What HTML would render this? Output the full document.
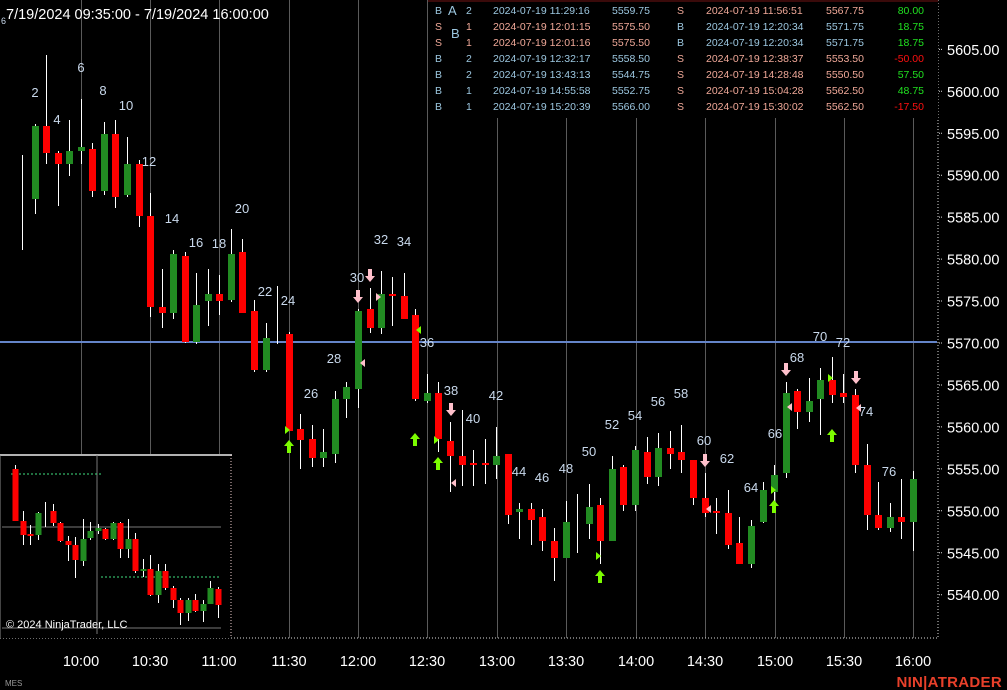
<!DOCTYPE html>
<html><head><meta charset="utf-8"><style>
html,body{margin:0;padding:0;background:#000;width:1007px;height:690px;overflow:hidden}
svg{display:block}
text{font-family:"Liberation Sans",sans-serif}
.n{fill:#c9d9ec;font-size:13px;text-anchor:middle;font-family:"DejaVu Sans Mono","Liberation Mono",monospace}
.ax{fill:#fff;font-size:14.5px}
.t{font-family:"Liberation Sans",sans-serif;font-size:10.5px}
</style></head><body>
<svg id="s" width="1007" height="690" xmlns="http://www.w3.org/2000/svg">
<rect width="1007" height="690" fill="#000"/>
<g id="grid" stroke="#5a5a5a" stroke-width="1"></g>
<line x1="0" y1="342" x2="937" y2="342" stroke="#6484c8" stroke-width="2"/>
<g id="candles"></g>
<g fill="#7cfc00">
<path d="M289 440 l-5 6 h3 v7 h4 v-7 h3z"/>
<path d="M415 433 l-5 6 h3 v7 h4 v-7 h3z"/>
<path d="M438 457 l-5 6 h3 v7 h4 v-7 h3z"/>
<path d="M600 570 l-5 6 h3 v7 h4 v-7 h3z"/>
<path d="M774 500 l-5 6 h3 v7 h4 v-7 h3z"/>
<path d="M832 429 l-5 6 h3 v7 h4 v-7 h3z"/>
<path d="M285 426 l5 4 l-5 4z"/><path d="M434 436 l5 4 l-5 4z"/><path d="M596 552 l5 4 l-5 4z"/><path d="M771 486 l5 4 l-5 4z"/><path d="M828 374 l5 4 l-5 4z"/><path d="M421 326 l-5 4 l5 4z"/>
</g>
<g fill="#ffc0cb">
<path d="M358 303 l-5 -6 h3 v-7 h4 v7 h3z"/>
<path d="M370 282 l-5 -6 h3 v-7 h4 v7 h3z"/>
<path d="M451 416 l-5 -6 h3 v-7 h4 v7 h3z"/>
<path d="M705 467 l-5 -6 h3 v-7 h4 v7 h3z"/>
<path d="M786 376 l-5 -6 h3 v-7 h4 v7 h3z"/>
<path d="M856 384 l-5 -6 h3 v-7 h4 v7 h3z"/>
<path d="M365 359 l-5 4 l5 4z"/><path d="M456 479 l-5 4 l5 4z"/><path d="M711 505 l-5 4 l5 4z"/><path d="M792 403 l-5 4 l5 4z"/><path d="M861 404 l-5 4 l5 4z"/><path d="M376 293 l5 4 l-5 4z"/>
</g>
<g class="n">
<text x="35" y="97">2</text><text x="57" y="124">4</text><text x="81" y="72">6</text><text x="103" y="95">8</text><text x="126" y="110">10</text><text x="149" y="166">12</text><text x="172" y="223">14</text><text x="196" y="247">16</text><text x="219" y="248">18</text><text x="242" y="213">20</text><text x="265" y="296">22</text><text x="288" y="305">24</text><text x="311" y="398">26</text><text x="334" y="363">28</text><text x="357" y="282">30</text><text x="381" y="244">32</text><text x="404" y="246">34</text><text x="427" y="347">36</text><text x="451" y="395">38</text><text x="473" y="423">40</text><text x="496" y="400">42</text><text x="519" y="476">44</text><text x="542" y="482">46</text><text x="566" y="473">48</text><text x="589" y="456">50</text><text x="612" y="429">52</text><text x="635" y="420">54</text><text x="658" y="406">56</text><text x="681" y="398">58</text><text x="704" y="445">60</text><text x="727" y="463">62</text><text x="751" y="492">64</text><text x="775" y="438">66</text><text x="797" y="362">68</text><text x="820" y="341">70</text><text x="843" y="347">72</text><text x="866" y="416">74</text><text x="889" y="476">76</text>
</g>
<line x1="938" y1="0" x2="938" y2="638" stroke="#ddd" stroke-dasharray="1,2"/>
<line x1="0" y1="638" x2="938" y2="638" stroke="#ddd" stroke-dasharray="1,2"/>
<g id="ylab" class="ax"></g>
<g class="ax" text-anchor="middle">
<text x="81" y="666">10:00</text><text x="150" y="666">10:30</text><text x="219" y="666">11:00</text><text x="289" y="666">11:30</text><text x="358" y="666">12:00</text><text x="427" y="666">12:30</text><text x="497" y="666">13:00</text><text x="566" y="666">13:30</text><text x="636" y="666">14:00</text><text x="705" y="666">14:30</text><text x="775" y="666">15:00</text><text x="844" y="666">15:30</text><text x="913" y="666">16:00</text>
</g>
<text x="5" y="686" fill="#999" font-size="8">MES</text>
<text x="1002" y="687" fill="#e8402a" font-size="15" font-weight="bold" text-anchor="end" letter-spacing="0.3">NIN|ATRADER</text>
<text x="6" y="19" fill="#fff" font-size="14.5">7/19/2024 09:35:00 - 7/19/2024 16:00:00</text>
<text x="1" y="24" fill="#c9d9ec" font-size="9">6</text>
<rect x="428" y="0" width="510" height="118" fill="#000"/>
<line x1="428" y1="1" x2="938" y2="1" stroke="#3a0a0a" stroke-width="2"/>
<text x="448" y="15" fill="#9cc7e0" font-size="13">A</text>
<text x="451" y="38" fill="#9cc7e0" font-size="13">B</text>
<g class="t" id="tbl"></g>
<rect x="0" y="454" width="231" height="184" fill="#000"/>
<line x1="0" y1="455" x2="232" y2="455" stroke="#eee" stroke-width="1.5"/>
<line x1="231" y1="455" x2="231" y2="638" stroke="#e8c8c8" stroke-dasharray="1,2"/>
<line x1="0" y1="455" x2="0" y2="638" stroke="#888"/>
<line x1="2" y1="527" x2="221" y2="527" stroke="#777"/>
<line x1="2" y1="628" x2="221" y2="628" stroke="#777"/>
<line x1="97" y1="455" x2="97" y2="634" stroke="#777"/>
<line x1="11" y1="474" x2="101" y2="474" stroke="#40e080" stroke-dasharray="2,2"/>
<line x1="101" y1="577" x2="221" y2="577" stroke="#40e080" stroke-dasharray="2,2"/>
<g id="mini"></g>
<text x="6" y="628" fill="#fff" font-size="11">© 2024 NinjaTrader, LLC</text>
</svg>
<script>
var NS="http://www.w3.org/2000/svg";
function el(p,t,a){var e=document.createElementNS(NS,t);for(var k in a)e.setAttribute(k,a[k]);p.appendChild(e);return e;}
var g=document.getElementById('grid');
[81,150,219,289,358,427,497,566,636,705,775,844,913].forEach(function(x){el(g,'line',{x1:x+.5,y1:0,x2:x+.5,y2:638});});
var R="#ff0000",G="#228b22";
var c=[[22,155,250,199,201,2],[35,124,214,126,199,1],[46,55,164,126,153,0],[58,151,206,153,164,0],[69,120,176,151,164,1],[81,99,164,147,151,1],[92,143,197,149,191,0],[104,122,195,134,191,1],[115,120,208,134,197,0],[127,137,197,164,195,1],[139,160,227,164,216,0],[150,193,317,216,307,0],[162,269,328,307,313,0],[173,250,319,254,313,1],[185,252,343,256,342,0],[196,273,344,305,342,1],[208,269,326,294,301,1],[219,275,315,294,301,0],[231,229,302,254,300,1],[242,239,313,252,313,0],[254,300,372,311,370,0],[266,323,372,338,370,1],[277,286,344,343,344,2],[289,332,431,334,431,0],[300,414,469,429,440,0],[312,425,467,439,458,0],[323,429,467,452,458,1],[335,391,463,399,454,1],[346,382,418,387,399,1],[358,309,408,311,389,1],[370,288,333,309,328,0],[381,271,334,294,328,1],[392,277,326,294,296,0],[404,273,319,296,319,0],[415,309,401,315,399,0],[427,374,403,393,401,1],[438,382,452,393,439,0],[450,422,492,441,456,0],[462,410,486,456,465,0],[473,450,486,463,465,0],[485,439,484,463,465,0],[496,427,479,456,465,1],[508,454,524,454,515,0],[519,503,539,509,512,1],[531,503,545,509,520,0],[542,509,551,517,541,0],[554,528,581,541,558,0],[566,501,558,522,558,1],[577,494,553,553,553,2],[589,484,539,507,524,1],[600,498,564,505,541,0],[612,456,541,469,541,1],[623,465,511,467,505,0],[635,446,511,450,505,1],[647,437,484,452,477,0],[658,433,486,448,477,1],[670,431,469,448,454,0],[681,425,473,452,460,0],[693,460,505,460,498,0],[705,473,517,498,513,0],[716,498,534,511,513,0],[728,490,549,513,545,0],[739,517,564,543,564,0],[751,520,568,526,564,1],[763,482,523,490,522,1],[774,465,501,475,492,1],[786,382,478,393,473,1],[797,389,429,391,412,0],[809,378,422,401,412,1],[820,368,435,380,399,1],[832,357,403,380,395,0],[843,374,403,393,397,0],[855,389,473,395,465,0],[867,444,530,465,515,0],[878,482,530,515,528,0],[890,503,532,517,528,1],[901,479,539,517,522,0],[913,471,551,479,522,1]];
var cg=document.getElementById('candles');
c.forEach(function(d){el(cg,'line',{x1:d[0]+.5,y1:d[1],x2:d[0]+.5,y2:d[2],stroke:'#fff','stroke-width':1});
 if(d[5]==2)return;
 var h=Math.max(d[4]-d[3],2);el(cg,'rect',{x:d[0]-3,y:d[3],width:7,height:h,fill:d[5]==1?G:R});});
var m=[[15,465,521,469,521,0],[23,511,545,521,535,0],[30,525,545,534,536,0],[38,512,540,513,535,1],[45,502,527,514,515,2],[53,504,526,511,523,0],[60,522,542,523,541,0],[68,536,561,541,545,0],[75,537,578,545,560,0],[83,519,566,539,561,1],[90,522,540,531,538,1],[98,524,534,528,531,1],[105,528,540,529,539,0],[113,522,540,523,539,1],[120,522,558,523,549,0],[128,519,558,539,549,1],[135,533,573,539,571,0],[143,559,577,569,571,1],[150,555,596,569,595,0],[158,564,603,571,595,1],[165,564,590,571,588,0],[173,586,608,588,600,0],[180,598,625,600,613,0],[188,598,621,600,613,1],[195,594,612,600,611,0],[203,600,622,604,611,1],[210,581,604,588,604,1],[218,587,618,589,605,0]];
var mg=document.getElementById('mini');
m.forEach(function(d){el(mg,'line',{x1:d[0]+.5,y1:d[1],x2:d[0]+.5,y2:d[2],stroke:'#fff'});
 if(d[5]==2)return;
 el(mg,'rect',{x:d[0]-2.5,y:d[3],width:6,height:Math.max(d[4]-d[3],1.5),fill:d[5]==1?G:R});});
var yl=document.getElementById('ylab');
for(var p=5605;p>=5540;p-=5){var y=343-(p-5570)*8.39;el(yl,'line',{x1:939,y1:y,x2:943,y2:y,stroke:'#ddd','stroke-dasharray':'1,1'});var t=el(yl,'text',{x:947,y:y+5.5});t.textContent=p+'.00';}
var rows=[["B","2","2024-07-19 11:29:16","5559.75","S","2024-07-19 11:56:51","5567.75","80.00"],["S","1","2024-07-19 12:01:15","5575.50","B","2024-07-19 12:20:34","5571.75","18.75"],["S","1","2024-07-19 12:01:16","5575.50","B","2024-07-19 12:20:34","5571.75","18.75"],["B","2","2024-07-19 12:32:17","5558.50","S","2024-07-19 12:38:37","5553.50","-50.00"],["B","2","2024-07-19 13:43:13","5544.75","S","2024-07-19 14:28:48","5550.50","57.50"],["B","1","2024-07-19 14:55:58","5552.75","S","2024-07-19 15:04:28","5562.50","48.75"],["B","1","2024-07-19 15:20:39","5566.00","S","2024-07-19 15:30:02","5562.50","-17.50"]];
var tb=document.getElementById('tbl');
var BC="#9cc7e0",SC="#f0a898";
rows.forEach(function(r,i){var y=14+i*16;var c1=r[0]=="B"?BC:SC,c2=r[4]=="B"?BC:SC;
 function tx(x,s,col,anc){var t=el(tb,'text',{x:x,y:y,fill:col});if(anc)t.setAttribute('text-anchor',anc);t.textContent=s;}
 tx(435,r[0],c1);tx(466,r[1],c1);tx(493,r[2],c1);tx(612,r[3],c1);tx(677,r[4],c2);tx(706,r[5],c2);tx(826,r[6],c2);
 tx(924,r[7],r[7][0]=="-"?"#ff1010":"#20e020","end");});
</script>
</body></html>
